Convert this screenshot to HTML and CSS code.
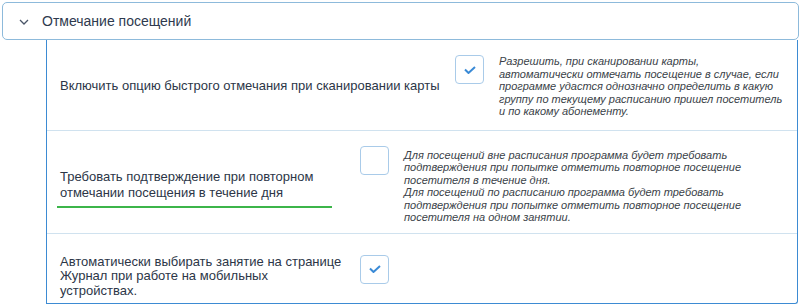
FILE: index.html
```html
<!DOCTYPE html>
<html lang="ru">
<head>
<meta charset="utf-8"/>
<title>Отмечание посещений</title>
<link rel="stylesheet" href="styles.css">
</head>
<body>
<div class="section-head">
  <svg class="chevron" width="10" height="6" viewBox="0 0 10 6"><polyline points="1,1 5,5 9,1" fill="none" stroke="#4a5568" stroke-width="1.3"/></svg>
  <span class="section-title">Отмечание посещений</span>
</div>
<div class="panel">
  <div class="row row-first">
    <div class="label label-wide">Включить опцию быстрого отмечания при сканировании карты</div>
    <div class="check"><svg width="12" height="8" viewBox="0 0 12 8"><polyline points="1,3.5 4.5,7 11,1" fill="none" stroke="#3a8ad6" stroke-width="2"/></svg></div>
    <div class="hint">Разрешить, при сканировании карты,<br>автоматически отмечать посещение в случае, если<br>программе удастся однозначно определить в какую<br>группу по текущему расписанию пришел посетитель<br>и по какому абонементу.</div>
  </div>
  <div class="row row-second">
    <div class="label label-marked">Требовать подтверждение при повторном отмечании посещения в течение дня</div>
    <div class="check"></div>
    <div class="hint hint-low">Для посещений вне расписания программа будет требовать<br>подтверждения при попытке отметить повторное посещение<br>посетителя в течение дня.<br>Для посещений по расписанию программа будет требовать<br>подтверждения при попытке отметить повторное посещение<br>посетителя на одном занятии.</div>
  </div>
  <div class="row row-third">
    <div class="label label-tight">Автоматически выбирать занятие на странице Журнал при работе на мобильных устройствах.</div>
    <div class="check"><svg width="12" height="8" viewBox="0 0 12 8"><polyline points="1,3.5 4.5,7 11,1" fill="none" stroke="#3a8ad6" stroke-width="2"/></svg></div>
  </div>
</div>
</body>
</html>
```
FILE: styles.css
```css
body {
  margin: 0;
  font-family: 'Liberation Sans', Arial, sans-serif;
  color: #2c3647;
  background: #fff;
}
.section-head {
  margin: 2px 4px 0 2px;
  height: 36px;
  border: 1px solid #8dbadb;
  border-radius: 5px;
  display: flex;
  align-items: center;
  padding-left: 16px;
}
.chevron {
  margin-right: 13px;
  margin-top: 1px;
}
.section-title {
  font-size: 14px;
  color: #2e3a4e;
}
.panel {
  margin: 0 5px 0 46px;
  border: 1px solid #3d8bd3;
  border-top: none;
  border-bottom-right-radius: 3px;
}
.row {
  display: flex;
  align-items: flex-start;
  padding: 15px 13px 12px 13px;
}
.row + .row {
  border-top: 1px solid #d0e2ef;
}
.row-second {
  padding-bottom: 8px;
  height: 79px;
}
.row-third {
  padding-top: 21px;
  padding-bottom: 2px;
  height: 46px;
}
.label {
  font-size: 13px;
  line-height: 16px;
  width: 284px;
  margin-right: 16px;
  flex: none;
  align-self: center;
}
.label-wide {
  width: 380px;
  margin-right: 15px;
}
.label-marked {
  position: relative;
}
.label-marked::after {
  content: "";
  position: absolute;
  left: -3px;
  bottom: -7px;
  width: 275px;
  height: 2px;
  background: #3cb54a;
}
.label-tight {
  line-height: 14.5px;
  align-self: flex-start;
}
.check {
  width: 27px;
  height: 27px;
  border: 1px solid #a9cbe9;
  border-radius: 4px;
  flex: none;
  display: flex;
  align-items: center;
  justify-content: center;
}
.hint {
  margin-left: 15px;
  font-size: 11px;
  line-height: 12.5px;
  font-style: italic;
  color: #3a3f48;
  white-space: nowrap;
}
.hint-low {
  margin-top: 3px;
}
```
